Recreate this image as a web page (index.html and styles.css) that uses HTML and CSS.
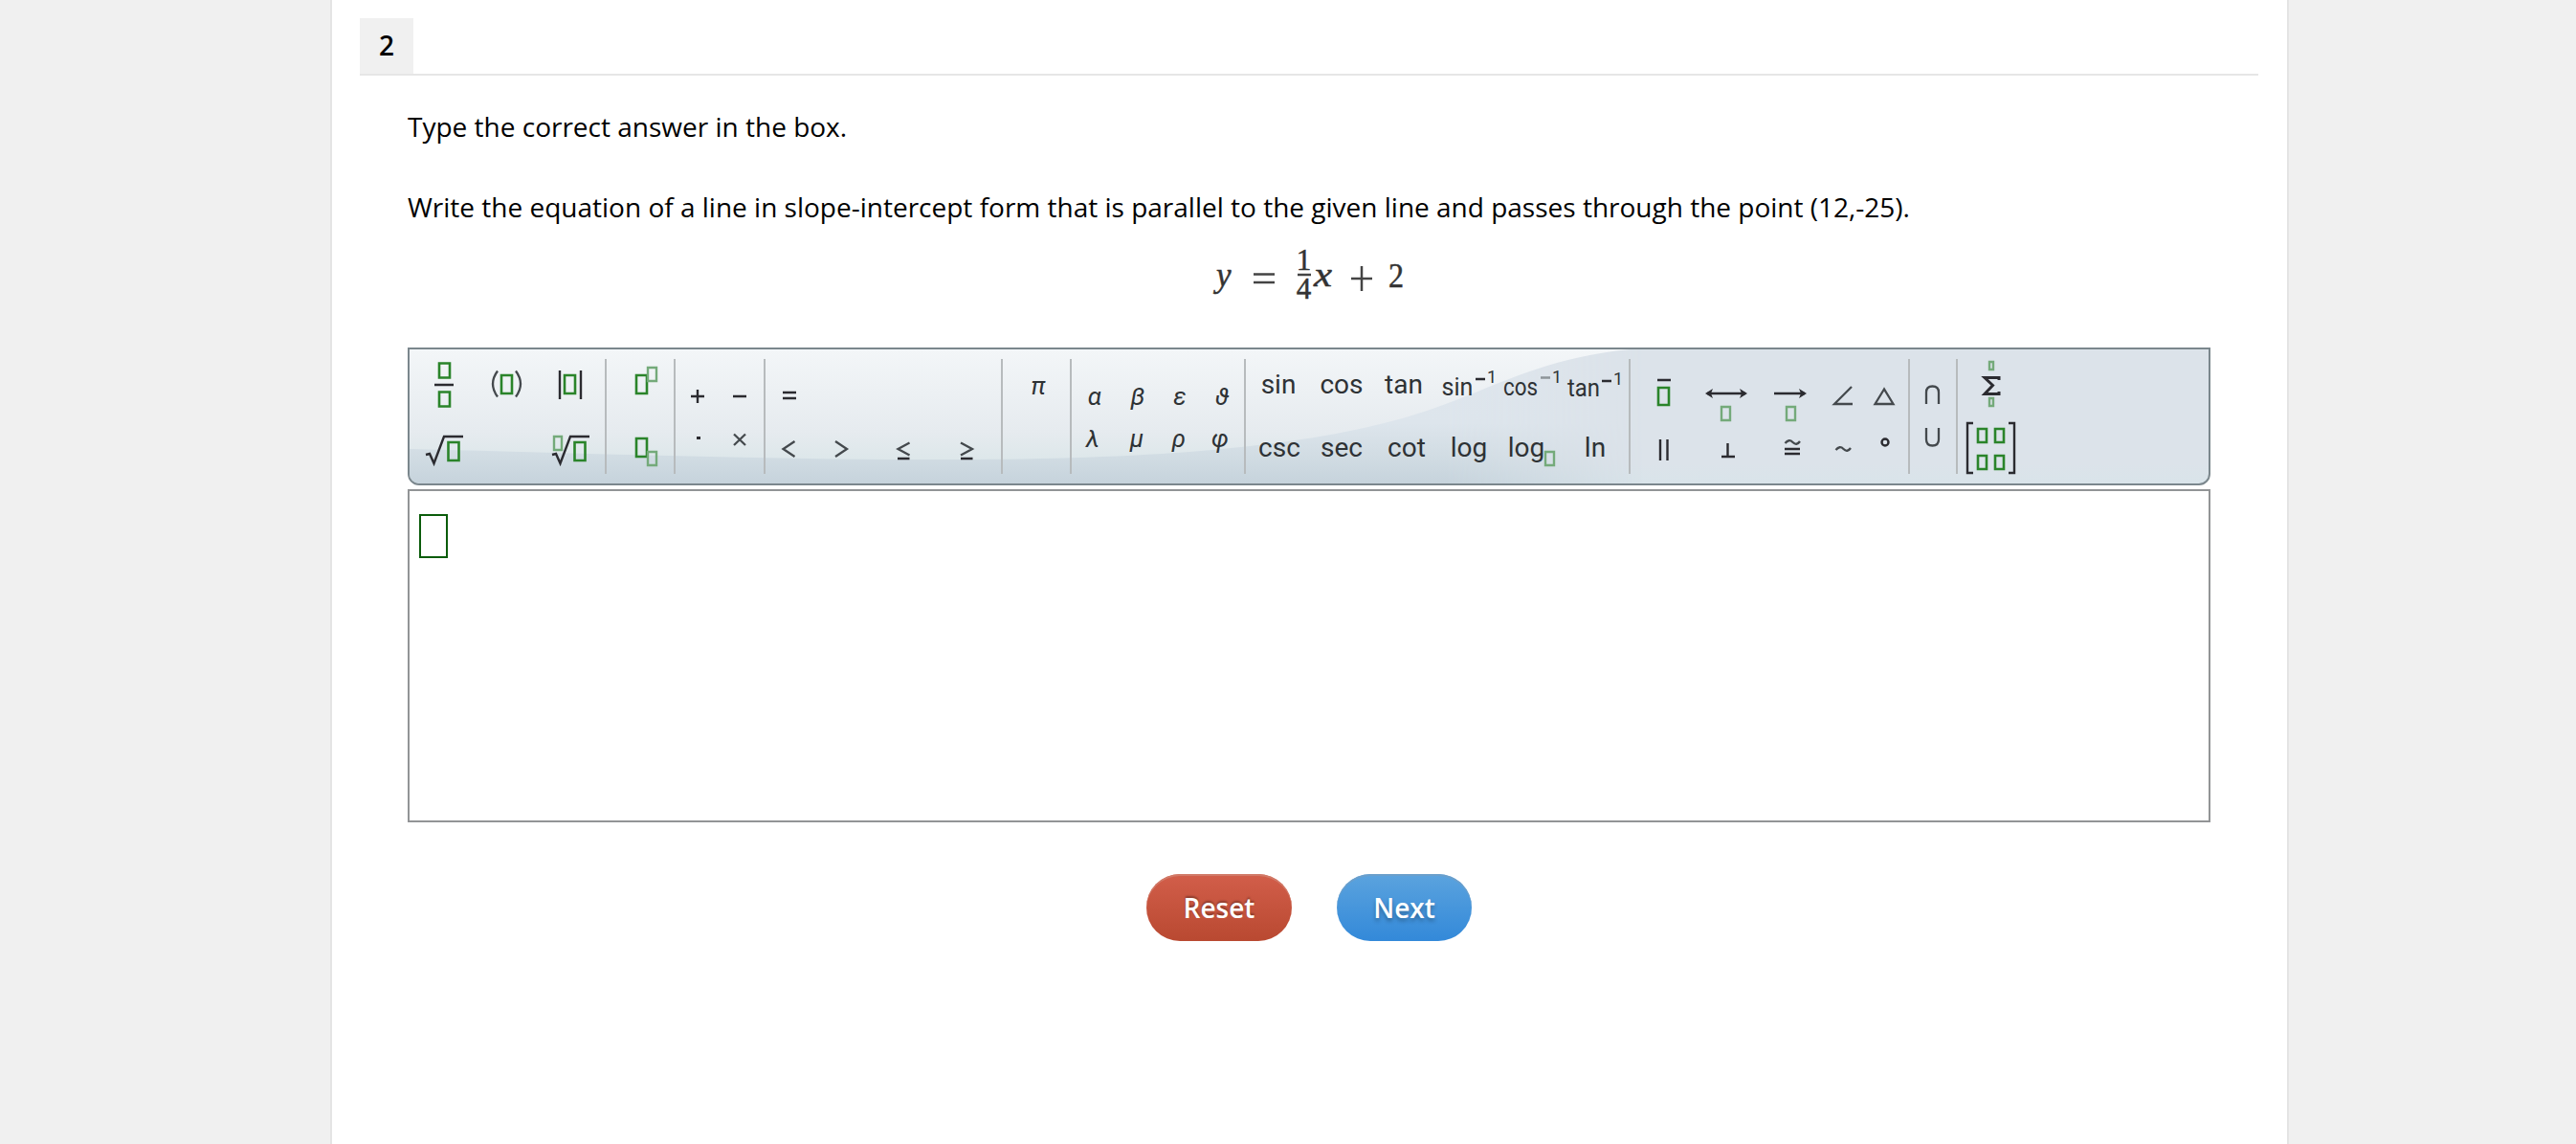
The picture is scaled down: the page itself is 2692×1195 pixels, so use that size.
FILE: index.html
```html
<!DOCTYPE html>
<html lang="en">
<head>
    <meta charset="UTF-8">
    <meta name="viewport" content="width=device-width, initial-scale=1.0">
    <title>Question 2</title>
    <link rel="stylesheet" href="styles.css">
</head>
<body>
    <main class="card">
        <header class="question-header">
            <span class="question-number">2</span>
        </header>

        <section class="question">
            <p>Type the correct answer in the box.</p>
            <p>Write the equation of a line in slope-intercept form that is parallel to the given line and passes through the point (12,-25).</p>
            <svg class="equation" width="220" height="70" viewBox="0 0 220 70">
                <text x="11" y="47" font-size="35" font-style="italic">y</text>
                <path d="M50 34.5h22M50 43h22"/>
                <text x="102.5" y="30" font-size="31" text-anchor="middle">1</text>
                <path d="M96 35h14"/>
                <text x="102.5" y="60" font-size="31" text-anchor="middle">4</text>
                <text x="113" y="47" font-size="36" font-style="italic" textLength="19" lengthAdjust="spacingAndGlyphs">x</text>
                <path d="M152 39h22M163 26v26"/>
                <text x="191" y="48" font-size="36" textLength="16" lengthAdjust="spacingAndGlyphs">2</text>
            </svg>
        </section>

        <div class="editor">
            <div class="toolbar">
                <svg class="toolbar-bg" width="1880" height="140" viewBox="0 0 1880 140">
                    <defs>
                        <linearGradient id="light" x1="0" y1="0" x2="0" y2="1">
                            <stop offset="0" stop-color="#f3f6f8"/>
                            <stop offset="0.75" stop-color="#e6ebef"/>
                            <stop offset="1" stop-color="#dde7ea"/>
                        </linearGradient>
                        <linearGradient id="dark" x1="0" y1="0" x2="0" y2="1">
                            <stop offset="0" stop-color="#dfe6ed"/>
                            <stop offset="0.55" stop-color="#dde5ec"/>
                            <stop offset="0.8" stop-color="#d1dce3"/>
                            <stop offset="1" stop-color="#c6d3dc"/>
                        </linearGradient>
                        <linearGradient id="fade" x1="0" y1="0" x2="1" y2="0">
                            <stop offset="0" stop-color="#fff"/>
                            <stop offset="0.84" stop-color="#fff"/>
                            <stop offset="1" stop-color="#000"/>
                        </linearGradient>
                        <mask id="fade-mask">
                            <rect width="1290" height="140" fill="url(#fade)"/>
                        </mask>
                    </defs>
                    <rect width="1290" height="140" fill="url(#dark)" mask="url(#fade-mask)"/>
                    <path d="M0 0H1275C1170 10 1120 50 1030 74C920 104 760 115 560 115C360 115 180 108 0 104z" fill="url(#light)"/>
                </svg>

                <div class="group cols-3">
                    <button class="tool"><svg width="66" height="60"><path class="box" d="M27 4.500h11v15H27zM27 34.500h11v15H27z"/><path d="M22 27h20"/></svg></button>
                    <button class="tool"><svg width="66" height="60"><path class="box" d="M26 17h11v19H26z"/><path class="thin" d="M22 12.500q-10 13.500 0 27M41 12.500q10 13.500 0 27"/></svg></button>
                    <button class="tool"><svg width="66" height="60"><path class="box" d="M26 17h11v19H26z"/><path d="M21 12v30M43 12v30"/></svg></button>
                    <button class="tool"><svg width="66" height="60"><path class="box" d="M36.500 27h11v19H36.500z"/><path d="M13 40l4-1 4.500 10L32 21h20"/></svg></button>
                    <span class="tool"></span>
                    <button class="tool"><svg width="66" height="60"><path class="box" d="M36.500 27h11v19H36.500z"/><path class="box pale" d="M15 21h8v14h-8z"/><path d="M13 40l4-1 4.500 10L32 21h20"/></svg></button>
                </div>
                <div class="group cols-1">
                    <button class="tool"><svg width="66" height="60"><path class="box" d="M29 17h11v19H29z"/><path class="box pale" d="M41 9h9v14h-9z"/></svg></button>
                    <button class="tool"><svg width="66" height="60"><path class="box" d="M29 23h11v19H29z"/><path class="box pale" d="M41 37h9v14h-9z"/></svg></button>
                </div>
                <div class="group cols-2 small">
                    <button class="tool"><svg width="44" height="60"><path d="M14 39h14M21 32v14"/></svg></button>
                    <button class="tool"><svg width="44" height="60"><path d="M14 39h14"/></svg></button>
                    <button class="tool"><svg width="44" height="60"><path class="dot" d="M20 21h4v3h-4z"/></svg></button>
                    <button class="tool"><svg width="44" height="60"><path class="thin" d="M15 18.500l12 11.500M27 18.500l-12 11.500"/></svg></button>
                </div>
                <div class="group relations">
                    <button class="tool"><svg width="44" height="60"><path d="M16 35h14M16 41h14"/></svg></button>
                    <span class="tool"></span>
                    <span class="tool"></span>
                    <span class="tool"></span>
                    <button class="tool"><svg width="44" height="60"><path class="thin" d="M28.500 26l-12 8 12 8"/></svg></button>
                    <button class="tool"><svg width="66" height="60"><path class="thin" d="M27 26l12 8-12 8"/></svg></button>
                    <button class="tool"><svg width="66" height="60"><path class="thin" d="M38.500 27.500l-12 6.500 12 6.500"/><path d="M26 44h12.500"/></svg></button>
                    <button class="tool"><svg width="66" height="60"><path class="thin" d="M26 27.500l12 6.500-12 6.500"/><path d="M26 44h12.500"/></svg></button>
                </div>
                <div class="group cols-1">
                    <button class="tool"><svg width="66" height="60"><text class="greek" x="35" y="37">π</text></svg></button>
                </div>
                <div class="group cols-4 small">
                    <button class="tool"><svg width="44" height="60"><text class="greek" x="22" y="48">α</text></svg></button>
                    <button class="tool"><svg width="44" height="60"><text class="greek" x="23" y="48">β</text></svg></button>
                    <button class="tool"><svg width="44" height="60"><text class="greek" x="23" y="48">ε</text></svg></button>
                    <button class="tool"><svg width="44" height="60"><text class="greek" x="23" y="48">ϑ</text></svg></button>
                    <button class="tool"><svg width="44" height="60"><text class="greek" x="20" y="32">λ</text></svg></button>
                    <button class="tool"><svg width="44" height="60"><text class="greek" x="22" y="32">μ</text></svg></button>
                    <button class="tool"><svg width="44" height="60"><text class="greek" x="22" y="32">ρ</text></svg></button>
                    <button class="tool"><svg width="44" height="60"><text class="greek" x="21" y="32">φ</text></svg></button>
                </div>
                <div class="group cols-6">
                    <button class="tool"><svg width="66" height="60"><text x="32" y="36">sin</text></svg></button>
                    <button class="tool"><svg width="66" height="60"><text x="32" y="36">cos</text></svg></button>
                    <button class="tool"><svg width="66" height="60"><text x="31" y="36">tan</text></svg></button>
                    <button class="tool"><svg width="66" height="60"><text class="inverse" x="21" y="38">sin</text><path d="M40 21h10"/><text class="power" x="57" y="25">1</text></svg></button>
                    <button class="tool"><svg width="66" height="60"><text class="inverse" x="21" y="38" textLength="36" lengthAdjust="spacingAndGlyphs">cos</text><path class="muted" d="M42 19.500h10"/><text class="power" x="59" y="25">1</text></svg></button>
                    <button class="tool"><svg width="66" height="60"><text class="inverse" x="21" y="39" textLength="34" lengthAdjust="spacingAndGlyphs">tan</text><path d="M40 23h10"/><text class="power" x="57" y="27">1</text></svg></button>
                    <button class="tool"><svg width="66" height="60"><text x="33" y="42">csc</text></svg></button>
                    <button class="tool"><svg width="66" height="60"><text x="32" y="42">sec</text></svg></button>
                    <button class="tool"><svg width="66" height="60"><text x="34" y="42">cot</text></svg></button>
                    <button class="tool"><svg width="66" height="60"><text x="33" y="42">log</text></svg></button>
                    <button class="tool"><svg width="66" height="60"><text x="27" y="42">log</text><path class="box pale" d="M47 37h9v14h-9z"/></svg></button>
                    <button class="tool"><svg width="66" height="60"><text x="33" y="42">ln</text></svg></button>
                </div>
                <div class="group geometry">
                    <button class="tool"><svg width="66" height="60"><path class="box" d="M27 30h11v18H27z"/><path d="M26 22h14"/></svg></button>
                    <button class="tool"><svg width="66" height="60"><path class="box pale" d="M27 50h9v14h-9z"/><path d="M12 36h40"/><path class="head" d="M10 36l8-5-2 5 2 5zM54 36l-8-5 2 5-2 5z"/></svg></button>
                    <button class="tool"><svg width="66" height="60"><path class="box pale" d="M29 50h9v14h-9z"/><path d="M16 36h32"/><path class="head" d="M50 36l-8-5 2 5-2 5z"/></svg></button>
                    <button class="tool"><svg width="44" height="60"><path class="thin" d="M31 29L13 47h19"/></svg></button>
                    <button class="tool"><svg width="44" height="60"><path class="thin" d="M21 31.500L11.500 47h19z"/></svg></button>
                    <button class="tool"><svg width="66" height="60"><path d="M29 24v22M36.500 24v22"/></svg></button>
                    <button class="tool"><svg width="66" height="60"><path d="M33.500 28v14M27 42h14"/></svg></button>
                    <button class="tool"><svg width="66" height="60"><path d="M27 34h16M27 39h16"/><path class="thin" d="M27.500 28q4-5 8-1t7.500-1"/></svg></button>
                    <button class="tool"><svg width="44" height="60"><path class="thin" d="M14.500 35q4-5 8-1t7.500-1"/></svg></button>
                    <button class="tool"><svg width="44" height="60"><circle cx="22" cy="27" r="3.500"/></svg></button>
                </div>
                <div class="group cols-1 small">
                    <button class="tool"><svg width="44" height="60"><path class="thin" d="M15 47V35q0-6.500 6.500-6.500T28 35v12"/></svg></button>
                    <button class="tool"><svg width="44" height="60"><path class="thin" d="M15 12v12q0 6.500 6.500 6.500T28 24V12"/></svg></button>
                </div>
                <div class="group cols-1 last">
                    <button class="tool"><svg width="66" height="60"><path class="box pale" d="M31 3h4v8h-4zM31 41h4v8h-4z"/><path class="sigma" d="M41 22v-2.500H26l8.500 8-8.500 9h15V34"/></svg></button>
                    <button class="tool"><svg width="66" height="60"><path class="box" d="M19 13h9v14h-9zM37 13h9v14h-9zM19 41h9v14h-9zM37 41h9v14h-9z"/><path d="M14 7H8v52h6M51 7h6v52h-6"/></svg></button>
                </div>
            </div>

            <div class="answer">
                <div class="answer-slot"></div>
            </div>
        </div>

        <div class="actions">
            <button class="btn reset">Reset</button>
            <button class="btn next">Next</button>
        </div>
    </main>
</body>
</html>
```
FILE: styles.css
```css
* {
    box-sizing: border-box;
}
body {
    margin: 0;
    background: #f0f0f0;
    font-family: "Open Sans", sans-serif;
    font-size: 28px;
    line-height: 42px;
    color: #000;
}
.card {
    width: 2047px;
    height: 1195px;
    margin-left: 345px;
    padding: 19px 30px 0 29px;
    background: #fff;
    border-left: 2px solid #e4e4e4;
    border-right: 2px solid #e4e4e4;
}
.question-header {
    display: flex;
    height: 60px;
    border-bottom: 2px solid #e6e6e6;
}
.question-number {
    width: 56px;
    line-height: 57px;
    background: #f0f0f0;
    font-weight: 600;
    text-align: center;
}
.question {
    display: flex;
    flex-direction: column;
    padding: 32px 50px 0;
}
.question p {
    margin: 0 0 42px;
}
.equation {
    align-self: center;
    margin: -27px 0 0 4px;
    font-family: "Liberation Serif", serif;
    fill: #333;
}
.equation text {
    stroke: #333;
    stroke-width: 0.5;
}
.equation path {
    stroke: #444;
    stroke-width: 2.5;
}

/* equation editor */
.editor {
    width: 1884px;
    margin: 41px 0 0 50px;
}
.toolbar {
    position: relative;
    display: flex;
    height: 144px;
    padding: 10px 2px;
    border: 2px solid #7b878d;
    border-radius: 0 0 12px 12px;
    background: linear-gradient(#dce3ea 85%, #d9e4ea);
    overflow: hidden;
}
.toolbar-bg {
    position: absolute;
    top: 0;
    left: 0;
}
.group {
    position: relative;
    display: grid;
    grid-template-rows: 60px 60px;
    height: 120px;
    padding: 0 2px;
    border-right: 2px solid #b7bbbd;
}
.cols-1 { grid-template-columns: 66px; }
.cols-3 { grid-template-columns: repeat(3, 66px); }
.cols-6 { grid-template-columns: repeat(6, 66px); }
.cols-1.small { grid-template-columns: 44px; }
.cols-2.small { grid-template-columns: repeat(2, 44px); }
.cols-4.small { grid-template-columns: repeat(4, 44px); }
.relations { grid-template-columns: 44px repeat(3, 66px); }
.geometry { grid-template-columns: repeat(3, 66px) repeat(2, 44px); }
.last {
    border-right: none;
}
.tool {
    padding: 0;
    border: none;
    background: none;
}
.tool svg {
    display: block;
    overflow: visible;
    fill: none;
    stroke: #2b2b30;
    stroke-width: 2.4;
}
.tool .thin {
    stroke: #44494d;
    stroke-width: 2.3;
}
.tool .muted {
    stroke: #8d9499;
}
.tool .sigma {
    stroke-width: 3;
}
.tool .box {
    stroke: #2a842a;
    stroke-width: 2.6;
}
.tool .pale {
    stroke: #74aa7a;
    stroke-width: 2.4;
}
.tool .dot,
.tool .head {
    fill: #2b2b30;
    stroke: none;
}
.tool text {
    font-family: Roboto, sans-serif;
    font-size: 28px;
    text-anchor: middle;
    fill: #2e3235;
    stroke: none;
}
.tool .greek {
    font-size: 26px;
    font-style: italic;
}
.tool .inverse {
    font-size: 25px;
}
.tool .power {
    font-size: 18px;
}
.answer {
    height: 348px;
    margin-top: 4px;
    padding: 24px 10px;
    border: 2px solid #929496;
}
.answer-slot {
    width: 30px;
    height: 46px;
    border: 2px solid #0b5c0b;
}

/* buttons */
.actions {
    display: flex;
    justify-content: center;
    gap: 47px;
    margin-top: 54px;
}
.btn {
    height: 70px;
    padding: 0;
    border: none;
    border-radius: 35px;
    color: #fff;
    font-family: inherit;
    font-size: 28px;
    font-weight: 600;
}
.reset {
    width: 152px;
    background: linear-gradient(#d25e4a, #b94931);
    box-shadow: inset 0 2px 0 #d17a68;
    text-shadow: 0 -2px 2px rgba(0, 0, 0, 0.3);
}
.next {
    width: 141px;
    background: linear-gradient(#5ba3de, #3389d9);
    box-shadow: inset 0 2px 0 #6b9fcb;
    text-shadow: 0 3px 4px rgba(0, 0, 0, 0.3);
}
```
